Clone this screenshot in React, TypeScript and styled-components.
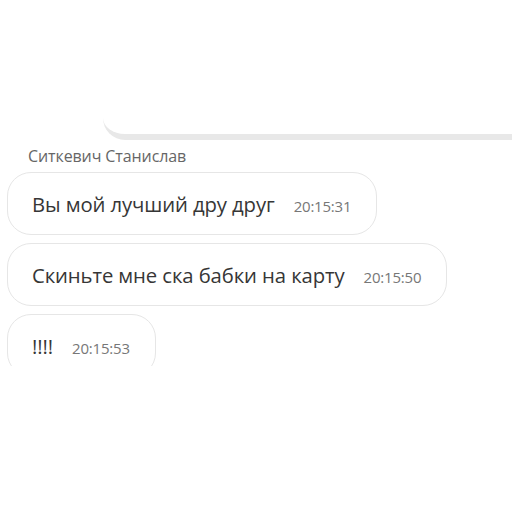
import styled, { createGlobalStyle } from "styled-components";

const GlobalStyle = createGlobalStyle`
  html, body {
    margin: 0;
    padding: 0;
    background: #ffffff;
  }
  body {
    font-family: "Open Sans", "Noto Sans", sans-serif;
  }
`;

const Page = styled.div`
  width: 512px;
  height: 512px;
  overflow: hidden;
  background: #fff;
`;

const Feed = styled.div`
  padding-top: 114px;
  height: 252px;
  overflow: hidden;
  display: flex;
  flex-direction: column;
`;

const PrevBubble = styled.div`
  margin-left: 103px;
  height: 20px;
  border-bottom: 6px solid #e8e8e8;
  border-bottom-left-radius: 22px;
  flex-shrink: 0;
`;

const Author = styled.div`
  margin: 6px 0 6px 28px;
  font-size: 16px;
  line-height: 20px;
  color: #666;
  letter-spacing: -0.1px;
`;

const Messages = styled.div`
  display: flex;
  flex-direction: column;
  align-items: flex-start;
  gap: 8px;
  padding-left: 7px;
`;

const Bubble = styled.div`
  display: flex;
  align-items: center;
  gap: 19px;
  height: 63px;
  padding: 0 25px 0 24px;
  border: 1.5px solid #e6e6e6;
  border-radius: 24px;
  box-sizing: border-box;
  flex-shrink: 0;
`;

const Text = styled.span`
  font-size: 20.3px;
  color: #363636;
  letter-spacing: -0.1px;
`;

const Time = styled.span`
  font-size: 15px;
  color: #777;
  letter-spacing: -0.2px;
  margin-top: 4px;
`;

const messages = [
  { text: "Вы мой лучший дру друг", time: "20:15:31" },
  { text: "Скиньте мне ска бабки на карту", time: "20:15:50" },
  { text: "!!!!", time: "20:15:53" },
];

export default function App() {
  return (
    <Page>
      <GlobalStyle />
      <Feed>
        <PrevBubble />
        <Author>Ситкевич Станислав</Author>
        <Messages>
          {messages.map((m) => (
            <Bubble key={m.time}>
              <Text>{m.text}</Text>
              <Time>{m.time}</Time>
            </Bubble>
          ))}
        </Messages>
      </Feed>
    </Page>
  );
}
